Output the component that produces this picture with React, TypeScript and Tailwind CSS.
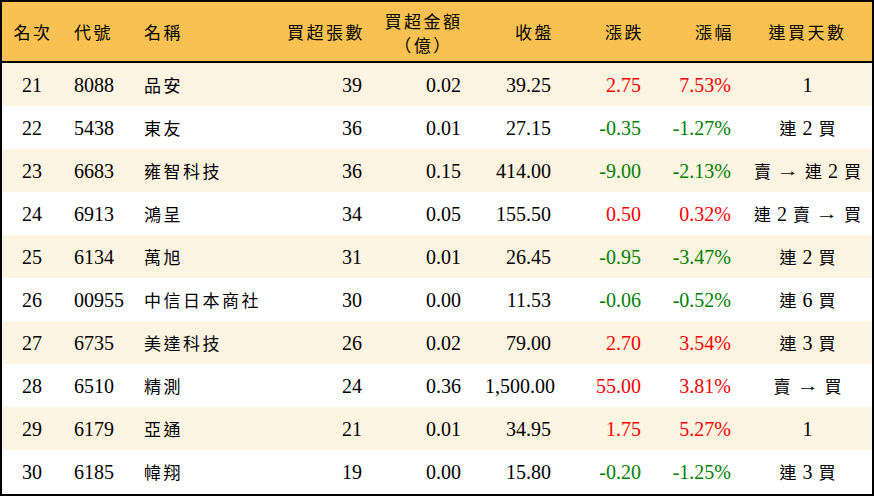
import React from "react";

type Row = {
  rank: number;
  code: string;
  name: string;
  lots: number;
  amount: string;
  close: string;
  change: string;
  pct: string;
  streak: string;
};

const rows: Row[] = [
  { rank: 21, code: "8088", name: "品安", lots: 39, amount: "0.02", close: "39.25", change: "2.75", pct: "7.53%", streak: "1" },
  { rank: 22, code: "5438", name: "東友", lots: 36, amount: "0.01", close: "27.15", change: "-0.35", pct: "-1.27%", streak: "連 2 買" },
  { rank: 23, code: "6683", name: "雍智科技", lots: 36, amount: "0.15", close: "414.00", change: "-9.00", pct: "-2.13%", streak: "賣 → 連 2 買" },
  { rank: 24, code: "6913", name: "鴻呈", lots: 34, amount: "0.05", close: "155.50", change: "0.50", pct: "0.32%", streak: "連 2 賣 → 買" },
  { rank: 25, code: "6134", name: "萬旭", lots: 31, amount: "0.01", close: "26.45", change: "-0.95", pct: "-3.47%", streak: "連 2 買" },
  { rank: 26, code: "00955", name: "中信日本商社", lots: 30, amount: "0.00", close: "11.53", change: "-0.06", pct: "-0.52%", streak: "連 6 買" },
  { rank: 27, code: "6735", name: "美達科技", lots: 26, amount: "0.02", close: "79.00", change: "2.70", pct: "3.54%", streak: "連 3 買" },
  { rank: 28, code: "6510", name: "精測", lots: 24, amount: "0.36", close: "1,500.00", change: "55.00", pct: "3.81%", streak: "賣 → 買" },
  { rank: 29, code: "6179", name: "亞通", lots: 21, amount: "0.01", close: "34.95", change: "1.75", pct: "5.27%", streak: "1" },
  { rank: 30, code: "6185", name: "幃翔", lots: 19, amount: "0.00", close: "15.80", change: "-0.20", pct: "-1.25%", streak: "連 3 買" },
];

const cols = "grid grid-cols-[60px_70px_150px_92px_99px_90px_90px_90px_129px]";
const cjkFont = { fontFamily: '"Noto Sans CJK TC", "Liberation Serif", sans-serif' };

// CJK label with the wider letter pitch of the original table
function Zh({ children }: { children: string }) {
  return (
    <span className="text-[17px] tracking-[2.5px] whitespace-nowrap" style={cjkFont}>
      {children}
    </span>
  );
}

function Streak({ text }: { text: string }) {
  const parts = text.split(" ");
  return (
    <div className="flex justify-center items-center gap-[6px] whitespace-nowrap">
      {parts.map((p, i) =>
        /^\d+$/.test(p) ? (
          <span key={i}>{p}</span>
        ) : p === "→" ? (
          <span key={i} className="text-[16px] scale-x-[1.4] inline-block mx-[3px]">
            →
          </span>
        ) : (
          <span key={i} className="text-[17px]" style={cjkFont}>
            {p}
          </span>
        )
      )}
    </div>
  );
}

export default function App() {
  return (
    <div
      className="w-[874px] h-[496px] bg-white border-2 border-black text-[20px] text-black"
      style={{ fontFamily: '"Liberation Serif", "Noto Sans CJK TC", serif' }}
    >
      {/* Header */}
      <div className={`${cols} h-[61px] bg-[#f8c151] border-b-2 border-black items-center`}>
        <div className="text-center pl-[2px]"><Zh>名次</Zh></div>
        <div className="px-3"><Zh>代號</Zh></div>
        <div className="px-3"><Zh>名稱</Zh></div>
        <div className="pr-[9px] text-right whitespace-nowrap"><Zh>買超張數</Zh></div>
        <div className="text-center leading-[24px] pt-[2px]">
          <div><Zh>買超金額</Zh></div>
          <div><Zh>（億）</Zh></div>
        </div>
        <div className="pr-[9px] text-right"><Zh>收盤</Zh></div>
        <div className="pr-[9px] text-right"><Zh>漲跌</Zh></div>
        <div className="pr-[9px] text-right"><Zh>漲幅</Zh></div>
        <div className="text-center"><Zh>連買天數</Zh></div>
      </div>

      {rows.map((r, i) => {
        const up = !r.change.startsWith("-");
        const color = up ? "text-[#ff0000]" : "text-[#008000]";
        return (
          <div
            key={r.rank}
            className={`${cols} h-[43px] items-center ${i % 2 === 0 ? "bg-[#fdf4e1]" : "bg-white"}`}
          >
            <div className="text-center">{r.rank}</div>
            <div className="px-3">{r.code}</div>
            <div className="px-3"><Zh>{r.name}</Zh></div>
            <div className="px-3 text-right">{r.lots}</div>
            <div className="px-3 text-right">{r.amount}</div>
            <div className="px-3 text-right">{r.close}</div>
            <div className={`px-3 text-right ${color}`}>{r.change}</div>
            <div className={`px-3 text-right ${color}`}>{r.pct}</div>
            <Streak text={r.streak} />
          </div>
        );
      })}
    </div>
  );
}
